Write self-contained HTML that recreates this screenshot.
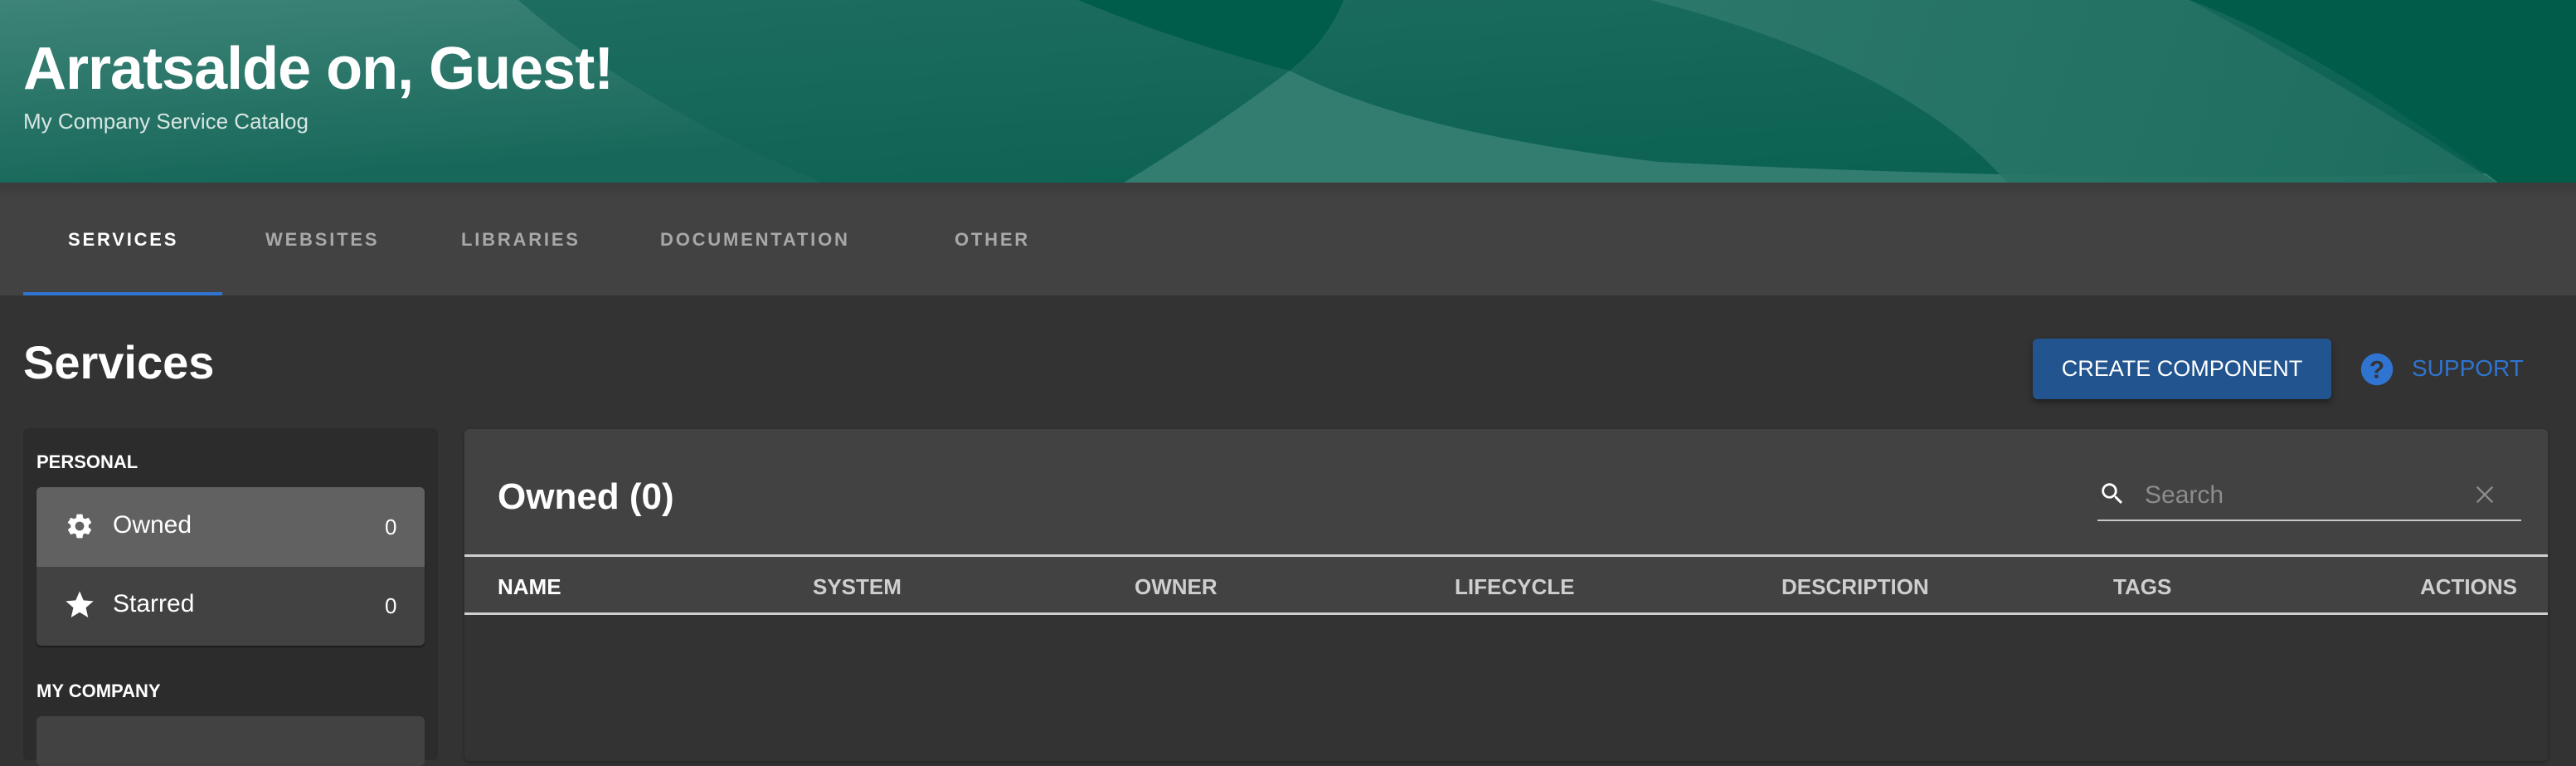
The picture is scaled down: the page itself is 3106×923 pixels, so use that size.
<!DOCTYPE html>
<html><head><meta charset="utf-8"><style>
*{margin:0;padding:0;box-sizing:border-box}
body{width:3106px;height:890px;overflow:hidden;background:#333;font-family:"Liberation Sans",Arial,sans-serif;position:relative}
.abs{position:absolute;white-space:nowrap}
.tab{position:absolute;top:276px;font-size:22px;font-weight:bold;letter-spacing:2.8px;color:#a8a8a8}
.th{position:absolute;top:692px;font-size:26px;font-weight:bold;color:#cfcfcf}
</style></head><body>
<svg class="abs" style="left:0;top:0" width="3106" height="220" viewBox="0 0 3106 220">
<defs>
<linearGradient id="g1" x1="0" y1="0" x2="0.3" y2="1"><stop offset="0" stop-color="#3e8478"/><stop offset="1" stop-color="#17685a"/></linearGradient>
<linearGradient id="g2" x1="0" y1="0" x2="1" y2="1"><stop offset="0" stop-color="#206f62"/><stop offset="1" stop-color="#075f4f"/></linearGradient>
<linearGradient id="g3" x1="0" y1="0" x2="1" y2="0"><stop offset="0" stop-color="#2e7a6c"/><stop offset="1" stop-color="#1f6e60"/></linearGradient>
</defs>
<rect width="3106" height="220" fill="url(#g2)"/>
<path d="M0 0 L625 0 Q760 120 990 220 L0 220Z" fill="url(#g1)"/>
<path d="M1300 0 L1620 0 Q1600 50 1555 85 Q1420 50 1300 0Z" fill="#005d4b"/>
<path d="M1555 85 Q1700 160 2000 195 Q2600 225 3106 205 L3106 220 L1355 220 Q1470 150 1555 85Z" fill="#327d70"/>
<path d="M1990 0 L2640 0 Q2840 110 3010 220 L2420 220 Q2300 80 1990 0Z" fill="url(#g3)" opacity="0.9"/>
<path d="M2640 0 L3106 0 L3106 220 L3012 220 Q2800 60 2640 0Z" fill="#015c4a"/>
</svg>
<div class="abs" style="left:28px;top:42px;font-size:72px;font-weight:bold;color:#fff;letter-spacing:-1px">Arratsalde on, Guest!</div>
<div class="abs" style="left:28px;top:131px;font-size:26px;color:#d7e6e2">My Company Service Catalog</div>
<div class="abs" style="left:0;top:220px;width:3106px;height:136px;background:linear-gradient(#3b3b3b,#424242 20px)"></div>
<div class="tab" style="left:82px;color:#fff">SERVICES</div>
<div class="tab" style="left:320px">WEBSITES</div>
<div class="tab" style="left:556px">LIBRARIES</div>
<div class="tab" style="left:796px">DOCUMENTATION</div>
<div class="tab" style="left:1151px">OTHER</div>
<div class="abs" style="left:28px;top:352px;width:240px;height:4px;background:#2f74d0"></div>
<div class="abs" style="left:28px;top:404px;font-size:56px;font-weight:bold;color:#fff">Services</div>
<div class="abs" style="left:2451px;top:408px;width:360px;height:73px;background:#22548f;border-radius:6px;box-shadow:0 4px 8px rgba(0,0,0,.4);color:#fff;font-size:27px;text-align:center;line-height:73px">CREATE COMPONENT</div>
<svg class="abs" style="left:2845px;top:424px" width="42" height="42" viewBox="0 0 24 24"><circle cx="12" cy="12" r="11" fill="#2f74d0"/><text x="12" y="18" text-anchor="middle" font-size="17" font-weight="bold" fill="#333" font-family="Liberation Sans">?</text></svg>
<div class="abs" style="left:2908px;top:428px;font-size:28px;color:#2f74d0">SUPPORT</div>
<div class="abs" style="left:28px;top:516px;width:500px;height:400px;background:#2c2c2c;border-radius:6px"></div>
<div class="abs" style="left:44px;top:544px;font-size:22px;font-weight:bold;color:#fff">PERSONAL</div>
<div class="abs" style="left:44px;top:587px;width:468px;height:191px;background:#424242;border-radius:6px;box-shadow:0 2px 2px rgba(0,0,0,.4);overflow:hidden">
<div style="height:96px;background:#616161"></div></div>
<svg class="abs" style="left:78px;top:616px" width="36" height="36" viewBox="0 0 24 24"><path fill="#fff" d="M19.14 12.94c.04-.3.06-.61.06-.94 0-.32-.02-.64-.07-.94l2.030-1.58a.49.49 0 0 0 .12-.61l-1.92-3.32a.49.49 0 0 0-.59-.22l-2.39.96c-.5-.38-1.03-.7-1.62-.94l-.36-2.54a.48.48 0 0 0-.48-.41h-3.84c-.24 0-.43.17-.47.41l-.36 2.54c-.59.24-1.130.57-1.62.94l-2.39-.96a.48.48 0 0 0-.59.22L2.74 8.87c-.12.21-.8.47.12.61l2.03 1.58c-.05.3-.09.63-.09.94s.2.64.07.94l-2.03 1.58a.49.49 0 0 0-.12.61l1.92 3.32c.12.22.37.29.59.22l2.39-.96c.5.38 1.03.7 1.62.94l.36 2.54c.5.24.24.41.48.41h3.84c.24 0 .44-.17.47-.41l.36-2.54c.59-.24 1.13-.56 1.62-.94l2.39.96c.22.08.47 0 .59-.22l1.92-3.32a.48.48 0 0 0-.12-.61l-2.01-1.58zM12 15.6A3.6 3.6 0 1 1 12 8.4a3.6 3.6 0 0 1 0 7.2z"/></svg>
<div class="abs" style="left:136px;top:616px;font-size:30px;color:#fff">Owned</div>
<div class="abs" style="left:464px;top:620px;font-size:26px;color:#fff">0</div>
<svg class="abs" style="left:76px;top:709px" width="40" height="40" viewBox="0 0 24 24"><path fill="#fff" d="M12 17.27 18.18 21l-1.64-7.03L22 9.24l-7.19-.61L12 2 9.19 8.63 2 9.240l5.46 4.73L5.82 21z"/></svg>
<div class="abs" style="left:136px;top:711px;font-size:30px;color:#fff">Starred</div>
<div class="abs" style="left:464px;top:715px;font-size:26px;color:#fff">0</div>
<div class="abs" style="left:44px;top:820px;font-size:22px;font-weight:bold;color:#fff">MY COMPANY</div>
<div class="abs" style="left:44px;top:863px;width:468px;height:60px;background:#424242;border-radius:6px"></div>
<div class="abs" style="left:560px;top:517px;width:2512px;height:400px;background:#333;border-radius:6px;overflow:hidden;box-shadow:0 2px 4px rgba(0,0,0,.3)">
<div style="height:224px;background:#424242"></div></div>
<div class="abs" style="left:560px;top:668px;width:2512px;height:3px;background:#d0d0d0"></div>
<div class="abs" style="left:560px;top:738px;width:2512px;height:3px;background:#d0d0d0"></div>
<div class="abs" style="left:600px;top:574px;font-size:44px;font-weight:bold;color:#fff">Owned (0)</div>
<svg class="abs" style="left:2530px;top:578px" width="34" height="34" viewBox="0 0 24 24"><path fill="#fff" d="M15.5 14h-.79l-.28-.27A6.47 6.47 0 0 0 16 9.5 6.5 6.5 0 1 0 9.5 16c1.61 0 3.09-.59 4.23-1.57l.27.28v.79l5 4.99L20.49 19l-4.99-5zm-6 0C7.01 14 5 11.99 5 9.5S7.01 5 9.5 5 14 7.01 14 9.5 11.99 14 9.5 14z"/></svg>
<div class="abs" style="left:2586px;top:580px;font-size:30px;color:#8c8c8c">Search</div>
<svg class="abs" style="left:2982px;top:582px" width="28" height="28" viewBox="0 0 24 24"><path stroke="#8c8c8c" stroke-width="2" d="M4 4 20 20M20 4 4 20"/></svg>
<div class="abs" style="left:2529px;top:626px;width:511px;height:2px;background:#c8c8c8"></div>
<div class="th" style="left:600px;color:#fff">NAME</div>
<div class="th" style="left:980px">SYSTEM</div>
<div class="th" style="left:1368px">OWNER</div>
<div class="th" style="left:1754px">LIFECYCLE</div>
<div class="th" style="left:2148px">DESCRIPTION</div>
<div class="th" style="left:2548px">TAGS</div>
<div class="th" style="left:2918px">ACTIONS</div>
</body></html>
